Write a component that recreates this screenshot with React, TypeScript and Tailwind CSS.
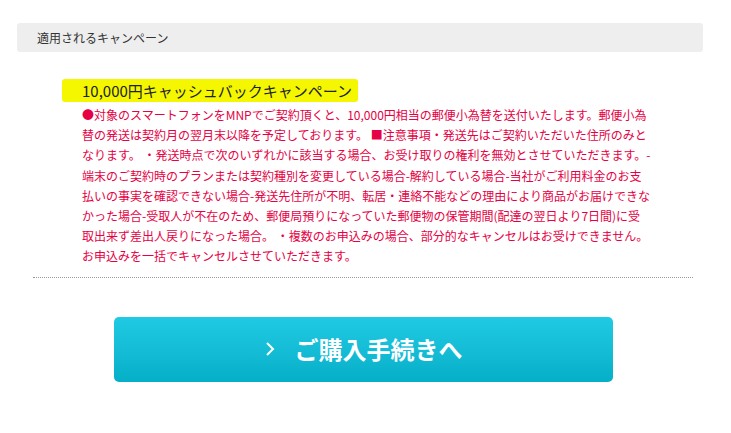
const lines = [
  "●対象のスマートフォンをMNPでご契約頂くと、10,000円相当の郵便小為替を送付いたします。郵便小為",
  "替の発送は契約月の翌月末以降を予定しております。 ■注意事項・発送先はご契約いただいた住所のみと",
  "なります。 ・発送時点で次のいずれかに該当する場合、お受け取りの権利を無効とさせていただきます。-",
  "端末のご契約時のプランまたは契約種別を変更している場合-解約している場合-当社がご利用料金のお支",
  "払いの事実を確認できない場合-発送先住所が不明、転居・連絡不能などの理由により商品がお届けできな",
  "かった場合-受取人が不在のため、郵便局預りになっていた郵便物の保管期間(配達の翌日より7日間)に受",
  "取出来ず差出人戻りになった場合。 ・複数のお申込みの場合、部分的なキャンセルはお受けできません。",
  "お申込みを一括でキャンセルさせていただきます。",
];

export default function App() {
  return (
    <div className="h-[433px] w-[731px] overflow-hidden bg-white pt-[23px] font-['Noto_Sans_CJK_JP','Noto_Sans',sans-serif]">
      <div className="ml-[17px] flex h-[29px] w-[686px] items-center rounded-[3px] bg-[#eeeeee] pl-[20px] text-[12px] text-[#333333]">
        適用されるキャンペーン
      </div>

      <div className="ml-[62px] mt-[26px]">
        <span className="inline-block h-[23px] rounded-[3px] bg-[#f4f700] pl-[20px] pr-[6px] text-[15px] leading-[23px] text-[#222222]">
          10,000円キャッシュバックキャンペーン
        </span>
      </div>

      <div className="ml-[82px] mt-[3px] text-[12px] leading-[20.2px] text-[#e60044]">
        {lines.map((line) => (
          <p key={line} className="whitespace-nowrap">
            {line}
          </p>
        ))}
      </div>

      <div className="ml-[33px] mt-[10px] w-[660px] border-t border-dotted border-[#999999]" />

      <div className="mt-[39px] flex justify-center pr-[4px]">
        <button className="flex h-[65px] w-[499px] items-center justify-center gap-[20px] rounded-[5px] bg-gradient-to-b from-[#20cae4] to-[#04afc7] text-white">
          <svg width="10" height="16" viewBox="0 0 10 16" fill="none">
            <path d="M2 2 L8 8 L2 14" stroke="white" strokeWidth="2" />
          </svg>
          <span className="text-[24px] font-bold">ご購入手続きへ</span>
        </button>
      </div>
    </div>
  );
}
